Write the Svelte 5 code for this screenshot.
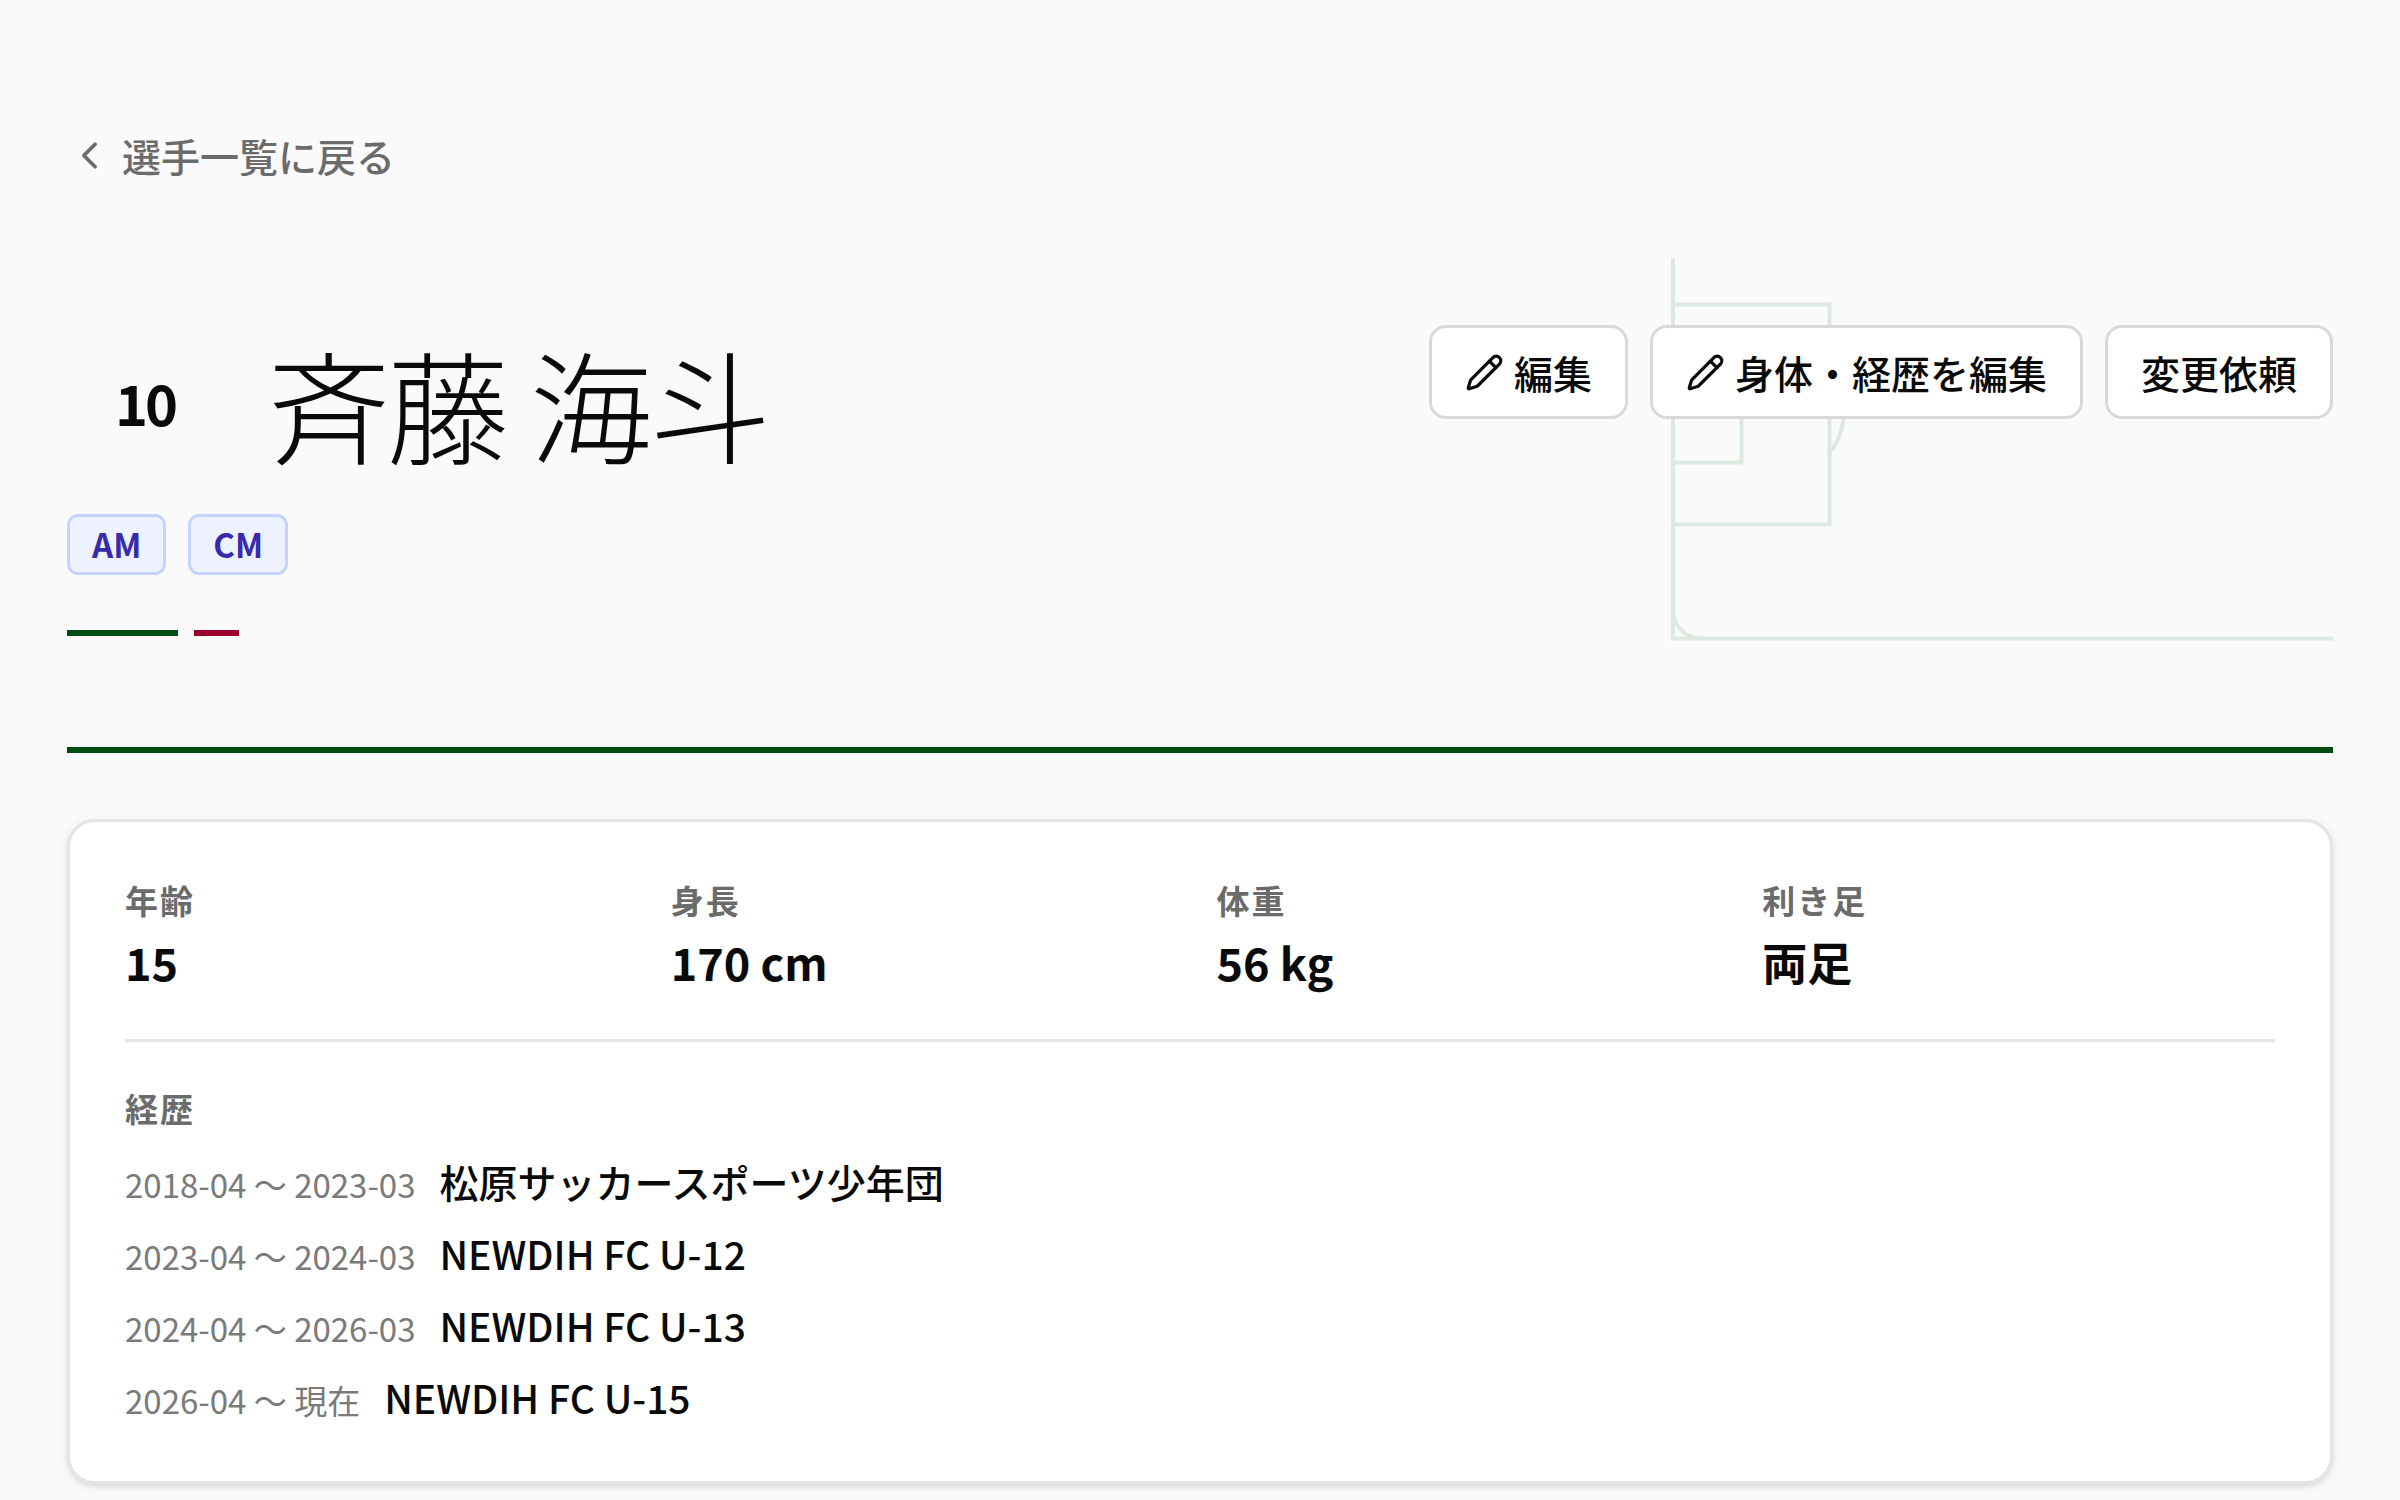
<script>
	const player = {
		number: 10,
		name: "斉藤 海斗",
		positions: ["AM", "CM"]
	};

	const profile = [
		{ label: "年齢", value: "15" },
		{ label: "身長", value: "170 cm" },
		{ label: "体重", value: "56 kg" },
		{ label: "利き足", value: "両足" }
	];

	const career = [
		{ period: "2018-04 〜 2023-03", team: "松原サッカースポーツ少年団" },
		{ period: "2023-04 〜 2024-03", team: "NEWDIH FC U-12" },
		{ period: "2024-04 〜 2026-03", team: "NEWDIH FC U-13" },
		{ period: "2026-04 〜 現在", team: "NEWDIH FC U-15" }
	];
</script>

{#snippet pencil()}
	<svg class="icon-pencil" viewBox="0 0 24 24" aria-hidden="true">
		<path
			d="M21.174 6.812a1 1 0 0 0-3.986-3.987L3.842 16.174a2 2 0 0 0-.5.83l-1.321 4.352a.5.5 0 0 0 .623.622l4.353-1.32a2 2 0 0 0 .83-.497z"
		/>
		<path d="m15 5 4 4" />
	</svg>
{/snippet}

<main class="page">
	<a class="back" href="#players">
		<svg class="icon-chevron" viewBox="0 0 24 24" aria-hidden="true">
			<path d="m15 18-6-6 6-6" />
		</svg>
		選手一覧に戻る
	</a>

	<header class="hero">
		<svg class="pitch" viewBox="0 0 662 384" aria-hidden="true">
			<path d="M2 0V380.5H662" />
			<path d="M2 46.5H158.5V266.5H2" />
			<path d="M2 108H70.5V204.5H2" />
			<path d="M158.5 118.5A59 59 0 0 1 158.5 194.5" />
			<path d="M2 352A28.5 28.5 0 0 0 30.5 380.5" />
		</svg>

		<div class="hero-row">
			<div class="identity">
				<span class="number">{player.number}</span>
				<h1>{player.name}</h1>
			</div>
			<div class="actions">
				<button type="button">{@render pencil()}編集</button>
				<button type="button">{@render pencil()}身体・経歴を編集</button>
				<button type="button">変更依頼</button>
			</div>
		</div>

		<ul class="positions">
			{#each player.positions as position}
				<li>{position}</li>
			{/each}
		</ul>

		<div class="accent">
			<span class="accent-green"></span>
			<span class="accent-red"></span>
		</div>
	</header>

	<section class="card">
		<dl class="profile">
			{#each profile as item}
				<div>
					<dt>{item.label}</dt>
					<dd>{item.value}</dd>
				</div>
			{/each}
		</dl>

		<div class="career">
			<h2>経歴</h2>
			<ul>
				{#each career as entry}
					<li>
						<span class="period">{entry.period}</span>
						<span class="team">{entry.team}</span>
					</li>
				{/each}
			</ul>
		</div>
	</section>
</main>

<style>
	:global(body) {
		margin: 0;
		background: #fafafa;
	}

	.page {
		padding: 127px 67px 16px;
		font-family: "Noto Sans CJK JP", sans-serif;
		font-size: 39px;
		line-height: 56px;
		color: #0a0a0a;
	}

	ul,
	dl,
	dd,
	h1,
	h2 {
		margin: 0;
		padding: 0;
		list-style: none;
	}

	svg {
		fill: none;
		stroke: currentColor;
		stroke-linecap: round;
		stroke-linejoin: round;
		stroke-width: 2;
		flex-shrink: 0;
	}

	.back {
		display: inline-flex;
		align-items: center;
		gap: 10px;
		color: #6b6b6b;
		font-weight: 500;
		text-decoration: none;
		vertical-align: top;
	}

	.icon-chevron {
		width: 45px;
		height: 45px;
	}

	.hero {
		position: relative;
		margin-top: 75px;
		padding: 67px 0 111px;
		border-bottom: 6px solid #004d14;
	}

	.pitch {
		position: absolute;
		top: 0;
		right: 0;
		width: 662px;
		height: 384px;
		color: #dde8e0;
		stroke-width: 4;
		stroke-linecap: butt;
		stroke-linejoin: miter;
	}

	.hero-row {
		position: relative;
		display: flex;
		justify-content: space-between;
		align-items: flex-start;
		gap: 45px;
	}

	.identity {
		display: flex;
		align-items: center;
		gap: 45px;
	}

	.number {
		display: flex;
		align-items: center;
		justify-content: center;
		width: 156px;
		height: 154px;
		font-size: 56px;
		font-weight: 700;
		letter-spacing: -3px;
	}

	h1 {
		font-size: 122px;
		font-weight: 300;
		line-height: 122px;
		letter-spacing: -3px;
	}

	.actions {
		display: flex;
		gap: 22px;
	}

	button {
		display: flex;
		align-items: center;
		gap: 10px;
		padding: 16px 33px;
		border: 3px solid #d9d9d9;
		border-radius: 17px;
		background: #fff;
		color: inherit;
		font: inherit;
		font-weight: 500;
		cursor: pointer;
	}

	.icon-pencil {
		width: 39px;
		height: 39px;
	}

	.positions {
		display: flex;
		gap: 22px;
		margin-top: 35px;
	}

	.positions li {
		padding: 5px 22px;
		border: 3px solid #c6d2ff;
		border-radius: 11px;
		background: #eef2ff;
		color: #372aac;
		font-size: 33px;
		font-weight: 700;
		line-height: 45px;
	}

	.accent {
		display: flex;
		gap: 16px;
		margin-top: 55px;
	}

	.accent span {
		height: 6px;
	}

	.accent-green {
		width: 111px;
		background: #004d14;
	}

	.accent-red {
		width: 45px;
		background: #99002e;
	}

	.card {
		margin-top: 66px;
		padding: 56px 55px;
		border: 3px solid #e5e5e5;
		border-radius: 28px;
		background: #fff;
		box-shadow:
			0 3px 8px rgba(0, 0, 0, 0.1),
			0 3px 6px -3px rgba(0, 0, 0, 0.1);
	}

	.profile {
		display: grid;
		grid-template-columns: repeat(4, 1fr);
		gap: 33px;
		padding-bottom: 44px;
		border-bottom: 3px solid #e5e5e5;
	}

	dt,
	h2 {
		color: #6b6b6b;
		font-size: 33px;
		font-weight: 700;
		line-height: 45px;
		letter-spacing: 2px;
	}

	dd {
		margin-top: 6px;
		font-size: 45px;
		font-weight: 700;
		line-height: 66px;
	}

	.career {
		padding-top: 44px;
	}

	.career ul {
		display: flex;
		flex-direction: column;
		gap: 16px;
		margin-top: 22px;
	}

	.career li {
		display: flex;
		align-items: baseline;
		gap: 24px;
	}

	.period {
		color: #7a7a7a;
		font-size: 33px;
		line-height: 45px;
	}

	.team {
		font-weight: 500;
	}
</style>
